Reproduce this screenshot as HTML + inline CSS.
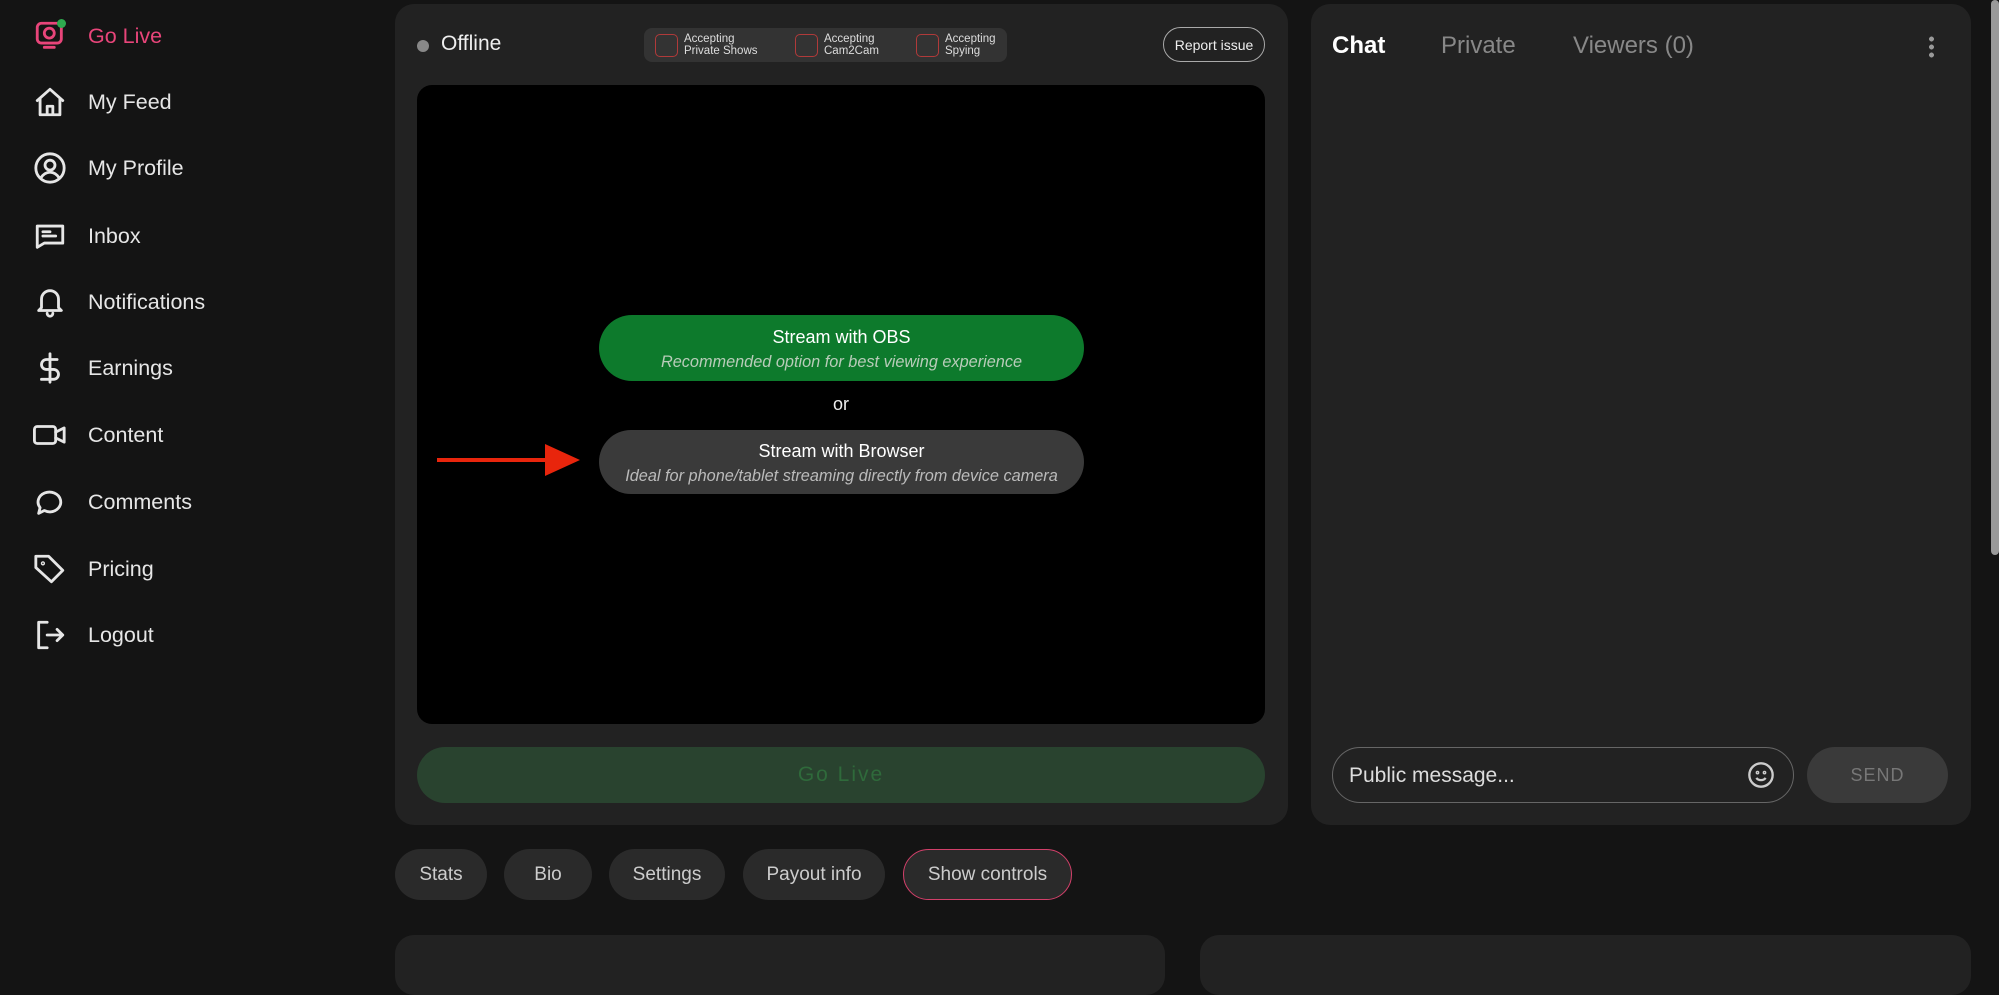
<!DOCTYPE html>
<html><head><meta charset="utf-8"><style>
*{box-sizing:border-box;margin:0;padding:0}
body{width:1999px;height:960px;overflow:hidden;background:#141414;font-family:"Liberation Sans",sans-serif;color:#ddd;position:relative}
.a{position:absolute}
.nav{position:absolute;left:33px;display:flex;align-items:center;font-size:21.5px;color:#e6e6e6}
.nav svg{width:34px;height:34px;margin-right:21px;fill:none;stroke:#e6e6e6;stroke-width:2;stroke-linecap:round;stroke-linejoin:round}
.panel{position:absolute;background:#222;border-radius:19px}
.cb{display:flex;align-items:center;font-size:11.5px;line-height:12px;color:#ddd}
.cb i{width:23px;height:23px;border:1.5px solid #b03a3a;border-radius:5px;margin-right:6px;display:block}
.tab{position:absolute;top:849px;height:51px;border-radius:26px;background:#2a2a2a;color:#ccc;font-size:19px;display:flex;align-items:center;justify-content:center}
</style></head><body>
<div class="nav" style="top:19px"><svg viewBox="0 0 24 24" style="stroke:#e8457a"><rect x="3" y="3" width="17" height="14" rx="3"/><circle cx="11.5" cy="10" r="3.5"/><path d="M8 20h7"/></svg><span style="color:#e8457a">Go Live</span></div>
<div class="a" style="left:57px;top:19px;width:9px;height:9px;border-radius:50%;background:#2ea84e"></div>
<div class="nav" style="top:85px"><svg viewBox="0 0 24 24"><path d="M3 11L12 3l9 8M5 9.5V21h14V9.5M10 21v-6h4v6"/></svg>My Feed</div>
<div class="nav" style="top:151px"><svg viewBox="0 0 24 24"><circle cx="12" cy="12" r="10"/><circle cx="12" cy="10" r="3.5"/><path d="M5.5 19c2-3 4-4 6.5-4s4.5 1 6.5 4"/></svg>My Profile</div>
<div class="nav" style="top:219px"><svg viewBox="0 0 24 24"><path d="M3 5h18v12H8l-5 3z"/><path d="M7 9h5M7 12h9"/></svg>Inbox</div>
<div class="nav" style="top:285px"><svg viewBox="0 0 24 24"><path d="M6 16V10a6 6 0 0112 0v6l2 2H4zM10 20a2 2 0 004 0"/></svg>Notifications</div>
<div class="nav" style="top:351px"><svg viewBox="0 0 24 24"><path d="M12 2v20M17 6H9.5a3.5 3.5 0 000 7h5a3.5 3.5 0 010 7H6"/></svg>Earnings</div>
<div class="nav" style="top:418px"><svg viewBox="0 0 24 24"><rect x="1" y="6" width="15" height="12" rx="2"/><path d="M16 10l6-3v10l-6-3"/></svg>Content</div>
<div class="nav" style="top:485px"><svg viewBox="0 0 24 24"><path d="M4 20l1-4A8 7 0 1112 19a9 9 0 01-4-1z"/></svg>Comments</div>
<div class="nav" style="top:552px"><svg viewBox="0 0 24 24"><path d="M2 3h9l10 10-8 8L2 11z"/><circle cx="7" cy="8" r="0.5"/></svg>Pricing</div>
<div class="nav" style="top:618px"><svg viewBox="0 0 24 24"><path d="M10 3H4v18h6M10 12h11M17 8l4 4-4 4"/></svg>Logout</div>

<div class="panel" style="left:395px;top:4px;width:893px;height:821px"></div>
<div class="a" style="left:417px;top:40px;width:12px;height:12px;border-radius:50%;background:#888"></div>
<div class="a" style="left:441px;top:32px;font-size:21px;color:#eee">Offline</div>
<div class="a" style="left:644px;top:28px;width:363px;height:34px;background:#333;border-radius:8px;display:flex;align-items:center;padding-left:11px">
<div class="cb" style="width:140px"><i></i><span>Accepting<br>Private Shows</span></div>
<div class="cb" style="width:121px"><i></i><span>Accepting<br>Cam2Cam</span></div>
<div class="cb"><i></i><span>Accepting<br>Spying</span></div></div>
<div class="a" style="left:1163px;top:27px;width:102px;height:35px;border:1.5px solid #aaa;border-radius:18px;font-size:14px;color:#eee;display:flex;align-items:center;justify-content:center">Report issue</div>
<div class="a" style="left:417px;top:85px;width:848px;height:639px;background:#000;border-radius:15px"></div>
<div class="a" style="left:599px;top:315px;width:485px;height:66px;background:#0d7a2c;border-radius:33px;text-align:center"><div style="font-size:18px;color:#fff;margin-top:12px">Stream with OBS</div><div style="font-size:16.3px;color:#b8ccb9;font-style:italic;margin-top:5px">Recommended option for best viewing experience</div></div>
<div class="a" style="left:0;width:1682px;top:394px;text-align:center;font-size:18px;color:#eee">or</div>
<div class="a" style="left:599px;top:430px;width:485px;height:64px;background:#3a3a3a;border-radius:32px;text-align:center"><div style="font-size:18px;color:#fff;margin-top:11px">Stream with Browser</div><div style="font-size:16.3px;color:#bbb;font-style:italic;margin-top:5px">Ideal for phone/tablet streaming directly from device camera</div></div>
<svg class="a" style="left:437px;top:442px" width="145" height="36"><path d="M0 18H110" stroke="#e8250c" stroke-width="4"/><path d="M108 2L143 18 108 34z" fill="#e8250c"/></svg>
<div class="a" style="left:417px;top:747px;width:848px;height:56px;background:#29432f;border-radius:28px;color:#2f6a3b;font-size:21px;letter-spacing:2px;display:flex;align-items:center;justify-content:center">Go Live</div>

<div class="panel" style="left:1311px;top:4px;width:660px;height:821px"></div>
<div class="a" style="left:1332px;top:32px;font-size:24px;font-weight:bold;color:#fff">Chat</div>
<div class="a" style="left:1441px;top:32px;font-size:24px;color:#888">Private</div>
<div class="a" style="left:1573px;top:32px;font-size:24px;color:#888">Viewers (0)</div>
<div class="a" style="left:1929px;top:35px;width:5px;height:24px;background:radial-gradient(circle,#999 2.3px,transparent 2.6px) 0 0/5px 8px"></div>
<div class="a" style="left:1332px;top:747px;width:462px;height:56px;border:1.5px solid #666;border-radius:28px;font-size:21px;color:#ddd;padding:16px 0 0 16px">Public message...</div>
<svg class="a" style="left:1747px;top:761px" width="28" height="28" viewBox="0 0 24 24" fill="none" stroke="#ccc" stroke-width="2"><circle cx="12" cy="12" r="10"/><circle cx="9" cy="10" r="0.6"/><circle cx="15" cy="10" r="0.6"/><path d="M8 14.5c2 2.5 6 2.5 8 0"/></svg>
<div class="a" style="left:1807px;top:747px;width:141px;height:56px;background:#3a3a3a;border-radius:28px;color:#777;font-size:18px;letter-spacing:1px;display:flex;align-items:center;justify-content:center">SEND</div>

<div class="tab" style="left:395px;width:92px">Stats</div>
<div class="tab" style="left:504px;width:88px">Bio</div>
<div class="tab" style="left:609px;width:116px">Settings</div>
<div class="tab" style="left:743px;width:142px">Payout info</div>
<div class="tab" style="left:903px;width:169px;border:1.5px solid #d2406a">Show controls</div>

<div class="panel" style="left:395px;top:935px;width:770px;height:60px"></div>
<div class="panel" style="left:1200px;top:935px;width:771px;height:60px"></div>
<div class="a" style="left:1991px;top:0;width:8px;height:555px;background:#9a9a9a;border-radius:4px"></div>
</body></html>
